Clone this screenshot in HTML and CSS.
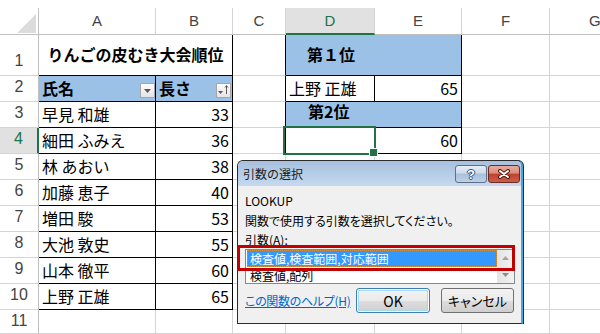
FILE: index.html
```html
<!DOCTYPE html>
<html lang="ja">
<head>
    <meta charset="UTF-8">
    <meta name="viewport" content="width=device-width, initial-scale=1.0">
    <title>りんごの皮むき大会順位 - LOOKUP</title>
    <link rel="stylesheet" href="styles.css">
</head>
<body>
    <div class="sheet">
        <!-- 列見出し -->
        <div class="cell corner"><svg width="19" height="19" viewBox="0 0 19 19"><path d="M19 0V19H0Z" fill="#dcdcdc"/></svg></div>
        <div class="cell ch">A</div>
        <div class="cell ch">B</div>
        <div class="cell ch">C</div>
        <div class="cell ch active">D</div>
        <div class="cell ch">E</div>
        <div class="cell ch">F</div>
        <div class="cell ch last">G</div>

        <!-- 1 -->
        <div class="cell rh">1</div>
        <div class="cell wide title bold br bb">りんごの皮むき大会順位</div>
        <div class="cell br"></div>
        <div class="cell wide fill bold rank br bb">第１位</div>
        <div class="cell"></div>
        <div class="cell"></div>

        <!-- 2 -->
        <div class="cell rh">2</div>
        <div class="cell fill bold br bb">氏名<span class="filter"><svg width="7" height="4" viewBox="0 0 7 4"><path d="M0 0h7L3.5 4z" fill="#595959"/></svg></span></div>
        <div class="cell fill bold br bb">長さ<span class="filter sorted"><svg width="13" height="13" viewBox="0 0 13 13"><path d="M1 7h5l-2.5 3z" fill="#595959"/><path d="M9.5 2v8M8 3.5l1.5-2 1.5 2" stroke="#595959" fill="none"/></svg></span></div>
        <div class="cell br"></div>
        <div class="cell br bb">上野 正雄</div>
        <div class="cell num br bb">65</div>
        <div class="cell"></div>
        <div class="cell"></div>

        <!-- 3 -->
        <div class="cell rh">3</div>
        <div class="cell br bb">早見 和雄</div>
        <div class="cell num br bb">33</div>
        <div class="cell br"></div>
        <div class="cell wide fill bold rank2 br bb">第2位</div>
        <div class="cell"></div>
        <div class="cell"></div>

        <!-- 4 -->
        <div class="cell rh active">4</div>
        <div class="cell br bb">細田 ふみえ</div>
        <div class="cell num br bb">36</div>
        <div class="cell br"></div>
        <div class="cell selected br bb"></div>
        <div class="cell num br bb">60</div>
        <div class="cell"></div>
        <div class="cell"></div>

        <!-- 5 -->
        <div class="cell rh">5</div>
        <div class="cell br bb">林 あおい</div>
        <div class="cell num br bb">38</div>
        <div class="cell"></div>
        <div class="cell"></div>
        <div class="cell"></div>
        <div class="cell"></div>
        <div class="cell"></div>

        <!-- 6 -->
        <div class="cell rh">6</div>
        <div class="cell br bb">加藤 恵子</div>
        <div class="cell num br bb">40</div>
        <div class="cell"></div>
        <div class="cell"></div>
        <div class="cell"></div>
        <div class="cell"></div>
        <div class="cell"></div>

        <!-- 7 -->
        <div class="cell rh">7</div>
        <div class="cell br bb">増田 駿</div>
        <div class="cell num br bb">53</div>
        <div class="cell"></div>
        <div class="cell"></div>
        <div class="cell"></div>
        <div class="cell"></div>
        <div class="cell"></div>

        <!-- 8 -->
        <div class="cell rh">8</div>
        <div class="cell br bb">大池 敦史</div>
        <div class="cell num br bb">55</div>
        <div class="cell"></div>
        <div class="cell"></div>
        <div class="cell"></div>
        <div class="cell"></div>
        <div class="cell"></div>

        <!-- 9 -->
        <div class="cell rh">9</div>
        <div class="cell br bb">山本 徹平</div>
        <div class="cell num br bb">60</div>
        <div class="cell"></div>
        <div class="cell"></div>
        <div class="cell"></div>
        <div class="cell"></div>
        <div class="cell"></div>

        <!-- 10 -->
        <div class="cell rh">10</div>
        <div class="cell br bb">上野 正雄</div>
        <div class="cell num br bb">65</div>
        <div class="cell"></div>
        <div class="cell"></div>
        <div class="cell"></div>
        <div class="cell"></div>
        <div class="cell"></div>

        <!-- 11 -->
        <div class="cell rh r11">11</div>
        <div class="cell"></div>
        <div class="cell"></div>
        <div class="cell"></div>
        <div class="cell"></div>
        <div class="cell"></div>
        <div class="cell"></div>
        <div class="cell"></div>
    </div>

    <!-- 引数の選択ダイアログ -->
    <div class="dialog">
        <div class="titlebar">
            <span class="caption">引数の選択</span>
            <span class="tbtn help">?</span>
            <span class="tbtn close"><svg width="14" height="10" viewBox="0 0 14 10"><path d="M3 2l8 6M11 2l-8 6" stroke="#4a1a14" stroke-width="4" stroke-linecap="round"/><path d="M3 2l8 6M11 2l-8 6" stroke="#fff" stroke-width="2" stroke-linecap="round"/></svg></span>
        </div>
        <div class="dlg-body">
            <p class="fn">LOOKUP</p>
            <p class="desc">関数で使用する引数を選択してください。</p>
            <p class="lbl">引数(<u>A</u>):</p>
            <div class="listbox">
                <ul class="items">
                    <li class="sel">検査値,検査範囲,対応範囲</li>
                    <li>検査値,配列</li>
                </ul>
                <div class="scroll">
                    <span class="sbtn"><svg width="7" height="4" viewBox="0 0 7 4"><path d="M3.5 0L7 4H0z" fill="#a3a3a3"/></svg></span>
                    <span class="sbtn"><svg width="7" height="4" viewBox="0 0 7 4"><path d="M0 0h7L3.5 4z" fill="#8c8c8c"/></svg></span>
                </div>
            </div>
            <div class="actions">
                <a class="help-link" href="#">この関数のヘルプ(H)</a>
                <button class="btn ok">OK</button>
                <button class="btn cancel">キャンセル</button>
            </div>
        </div>
        <div class="mark"></div>
    </div>
</body>
</html>
```

FILE: styles.css
```css
* {
    margin: 0;
    padding: 0;
    box-sizing: border-box;
}

html, body {
    overflow: hidden;
}

body {
    position: relative;
    width: 600px;
    height: 334px;
    padding-top: 8px;
    background: #fff;
    font-family: "Noto Sans CJK JP", sans-serif;
    color: #000;
}

/* シート */
.sheet {
    display: grid;
    grid-template-columns: 39px 117px 77px 53px 89px 87px 88px 1fr;
    grid-template-rows: 27px 41px repeat(9, 26px) 1fr;
    height: 100%;
}

.cell {
    display: flex;
    align-items: flex-end;
    padding: 0 3px 3px;
    font-size: 16px;
    line-height: 20px;
    white-space: nowrap;
    border-right: 1px solid #d4d4d4;
    border-bottom: 1px solid #d4d4d4;
}

.corner {
    justify-content: flex-end;
    padding: 0 2px 1px 0;
    border-right-color: #bfbfbf;
    border-bottom-color: #bfbfbf;
}

.ch {
    justify-content: center;
    align-items: center;
    padding: 0;
    font-family: "Liberation Sans", sans-serif;
    font-size: 15px;
    color: #444;
    border-bottom-color: #bfbfbf;
}

/* G列は右端で切れている */
.ch.last {
    justify-content: flex-start;
    padding-left: 39px;
    border-right: none;
}

.rh {
    justify-content: center;
    padding: 0 0 4px;
    font-family: "Liberation Sans", sans-serif;
    font-size: 16px;
    color: #444;
    border-right-color: #bfbfbf;
}

.rh.r11 {
    padding-bottom: 2px;
}

.ch.active {
    background: #e1e1e1;
    color: #217346;
    border-bottom: 2px solid #217346;
}

.rh.active {
    background: #e1e1e1;
    color: #217346;
    border-right: 2px solid #217346;
}

.wide {
    grid-column: span 2;
}

.num {
    justify-content: flex-end;
}

.fill {
    background: #9bc2e6;
}

.bold {
    font-weight: bold;
}

.br {
    border-right-color: #000;
}

.bb {
    border-bottom-color: #000;
}

.title {
    justify-content: center;
    align-items: center;
    padding-bottom: 2px;
}

.rank {
    align-items: center;
    padding: 0 0 3px 21px;
}

.rank2 {
    align-items: flex-start;
    padding: 0 0 0 22px;
    line-height: 18px;
}

.selected {
    position: relative;
}

.selected::after {
    content: "";
    position: absolute;
    top: -2px;
    left: -3px;
    right: -2px;
    bottom: -2px;
    border: 2px solid #217346;
}

.selected::before {
    content: "";
    position: absolute;
    right: -4px;
    bottom: -4px;
    width: 7px;
    height: 7px;
    background: #217346;
    border: 1px solid #fff;
    z-index: 1;
}

.filter {
    display: flex;
    align-items: center;
    justify-content: center;
    width: 15px;
    height: 15px;
    margin-left: auto;
    margin-right: -3px;
    border: 1px solid #a6a6a6;
    background: linear-gradient(#fdfdfd, #e4e4e4);
}

.filter.sorted {
    margin-right: -2px;
}

/* ダイアログ */
.dialog {
    position: absolute;
    left: 237px;
    top: 160px;
    width: 286px;
    height: 164px;
    border: 1px solid #2b2b2b;
    border-right: 2px solid #4ba7e2;
    border-radius: 6px 6px 0 0;
    box-shadow: 1px 0 0 #2b2b2b;
    background: #f0f0f0;
    font-size: 12px;
    font-feature-settings: "palt";
}

.titlebar {
    display: flex;
    align-items: flex-start;
    gap: 1px;
    height: 25px;
    padding: 4px 1px 0 5px;
    background: linear-gradient(#a6c0de, #c6d9ef);
    border-radius: 5px 5px 0 0;
}

.caption {
    margin-right: auto;
    line-height: 18px;
    color: #1a1a1a;
    font-feature-settings: normal;
}

.tbtn {
    display: flex;
    align-items: center;
    justify-content: center;
    width: 32px;
    height: 18px;
    border: 1px solid #5d6f89;
    border-radius: 3px;
}

.help {
    background: linear-gradient(#e6eef8 0%, #cbd9ea 45%, #a9bfdb 50%, #bcd0e8 100%);
    font: bold 13px "Liberation Sans", sans-serif;
    color: #fff;
    text-shadow: -1px 0 #3b4f6b, 1px 0 #3b4f6b, 0 -1px #3b4f6b, 0 1px #3b4f6b;
}

.close {
    border-color: #6b2b22;
    background: linear-gradient(#e9ad9f 0%, #d98b7b 45%, #c0402c 50%, #cb5f4a 100%);
}

.dlg-body {
    padding: 5px 6px 10px 7px;
}

.fn {
    line-height: 20px;
}

.desc,
.lbl {
    line-height: 19px;
}

.listbox {
    display: flex;
    height: 35px;
    border: 1px solid #828790;
    background: #fff;
    overflow: hidden;
}

.items {
    flex: 1;
    list-style: none;
    padding-left: 1px;
}

.items li {
    height: 17px;
    line-height: 17px;
    padding-left: 3px;
    white-space: nowrap;
    font-feature-settings: normal;
}

.items .sel {
    background: #3399ff;
    color: #fff;
    outline: 1px dotted #d9913c;
    outline-offset: -1px;
}

.scroll {
    display: flex;
    flex-direction: column;
    width: 17px;
    background: linear-gradient(90deg, #e4e4e4, #f2f2f2);
}

.sbtn {
    flex: 1;
    display: flex;
    align-items: center;
    justify-content: center;
}

.actions {
    display: flex;
    align-items: center;
    gap: 11px;
    margin-top: 4px;
    padding-right: 1px;
}

.help-link {
    flex: 1;
    min-width: 0;
    white-space: nowrap;
    letter-spacing: -0.3px;
    color: #0066cc;
    text-decoration: underline;
}

.btn {
    flex-shrink: 0;
    height: 25px;
    border: 1px solid #707070;
    border-radius: 3px;
    background: linear-gradient(#f2f2f2 0%, #ebebeb 50%, #dddddd 51%, #cfcfcf 100%);
    font-family: inherit;
    font-size: 13px;
    font-feature-settings: "palt";
    color: #000;
}

.ok {
    width: 74px;
    border-color: #3c7fb1;
    box-shadow: inset 0 0 0 1px #fff, inset 0 0 0 2px #a7d9f5;
    font-size: 14px;
}

.cancel {
    width: 73px;
}

/* 注目枠 */
.mark {
    position: absolute;
    left: -1px;
    top: 84px;
    width: 278px;
    height: 26px;
    border: 3px solid #c00000;
}
```
